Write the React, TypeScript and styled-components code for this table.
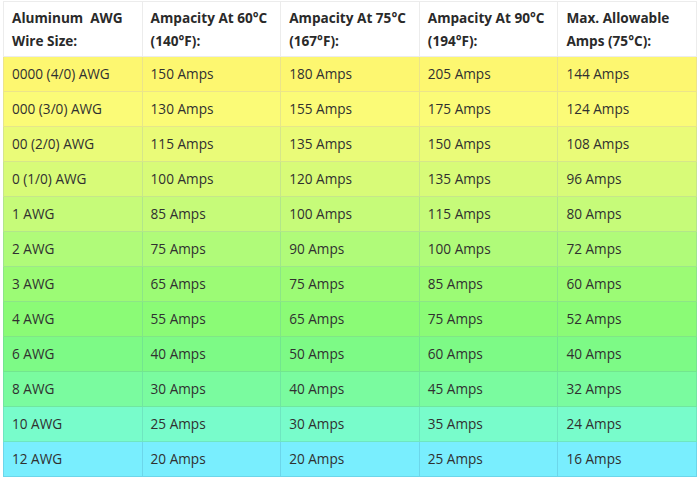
import React from "react";
import styled, { createGlobalStyle } from "styled-components";

const GlobalStyle = createGlobalStyle`
  html, body {
    margin: 0;
    padding: 0;
    background: #ffffff;
  }
  body {
    font-family: "Open Sans", "Noto Sans", sans-serif;
  }
`;

const Wrapper = styled.div`
  padding: 1px 3px 0 3px;
`;

const Table = styled.table`
  width: 694px;
  border-collapse: collapse;
  table-layout: fixed;
  font-size: 13.6px;
  color: #303030;
`;

const HeadCell = styled.th`
  background: #ffffff;
  border: 1px solid #ececec;
  padding: 4px 8px 4px 8px;
  line-height: 23px;
  text-align: left;
  vertical-align: top;
  font-weight: 700;
  color: #2a2a2a;
`;

const Row = styled.tr<{ $bg: string; $line: string }>`
  background: ${({ $bg }) => $bg};

  td {
    border: 1px solid ${({ $line }) => $line};
  }
`;

const Cell = styled.td`
  padding: 5px 8px;
  line-height: 24px;
  height: 24px;
  white-space: nowrap;
`;

type WireRow = {
  size: string;
  a60: string;
  a75: string;
  a90: string;
  max: string;
  bg: string;
  line: string;
};

const rows: WireRow[] = [
  { size: "0000 (4/0) AWG", a60: "150", a75: "180", a90: "205", max: "144", bg: "#fdf770", line: "#ece48a" },
  { size: "000 (3/0) AWG", a60: "130", a75: "155", a90: "175", max: "124", bg: "#fbfb77", line: "#e6e68a" },
  { size: "00 (2/0) AWG", a60: "115", a75: "135", a90: "150", max: "108", bg: "#eafb78", line: "#d6e68a" },
  { size: "0 (1/0) AWG", a60: "100", a75: "120", a90: "135", max: "96", bg: "#d8fb78", line: "#c6e68a" },
  { size: "1 AWG", a60: "85", a75: "100", a90: "115", max: "80", bg: "#c6fb79", line: "#b2e68a" },
  { size: "2 AWG", a60: "75", a75: "90", a90: "100", max: "72", bg: "#b0fb79", line: "#9ee68a" },
  { size: "3 AWG", a60: "65", a75: "75", a90: "85", max: "60", bg: "#9cfb75", line: "#8ce686" },
  { size: "4 AWG", a60: "55", a75: "65", a90: "75", max: "52", bg: "#8bfb76", line: "#80e686" },
  { size: "6 AWG", a60: "40", a75: "50", a90: "60", max: "40", bg: "#7dfa86", line: "#72e68e" },
  { size: "8 AWG", a60: "30", a75: "40", a90: "45", max: "32", bg: "#7afb9f", line: "#70e6a0" },
  { size: "10 AWG", a60: "25", a75: "30", a90: "35", max: "24", bg: "#78fccb", line: "#6ee6c0" },
  { size: "12 AWG", a60: "20", a75: "20", a90: "25", max: "16", bg: "#79eefe", line: "#6cd6ea" },
];

export default function App() {
  return (
    <>
      <GlobalStyle />
      <Wrapper>
        <Table>
          <thead>
            <tr>
              <HeadCell>
                Aluminum&nbsp; AWG
                <br />
                Wire Size:
              </HeadCell>
              <HeadCell>
                Ampacity At 60°C
                <br />
                (140°F):
              </HeadCell>
              <HeadCell>
                Ampacity At 75°C
                <br />
                (167°F):
              </HeadCell>
              <HeadCell>
                Ampacity At 90°C
                <br />
                (194°F):
              </HeadCell>
              <HeadCell>
                Max. Allowable
                <br />
                Amps (75°C):
              </HeadCell>
            </tr>
          </thead>
          <tbody>
            {rows.map((r) => (
              <Row key={r.size} $bg={r.bg} $line={r.line}>
                <Cell>{r.size}</Cell>
                <Cell>{r.a60} Amps</Cell>
                <Cell>{r.a75} Amps</Cell>
                <Cell>{r.a90} Amps</Cell>
                <Cell>{r.max} Amps</Cell>
              </Row>
            ))}
          </tbody>
        </Table>
      </Wrapper>
    </>
  );
}
